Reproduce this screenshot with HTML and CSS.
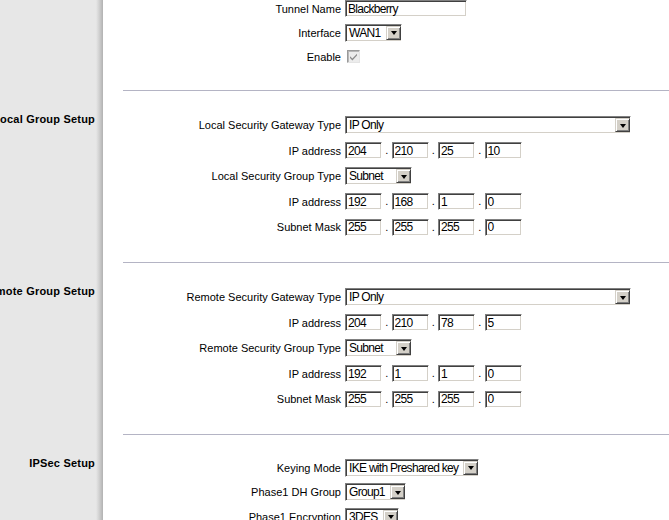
FILE: index.html
```html
<!DOCTYPE html>
<html lang="en">
<head>
  <meta charset="UTF-8" />
  <meta name="viewport" content="width=device-width, initial-scale=1.0" />
  <title>Gateway to Gateway</title>
  <link rel="stylesheet" href="styles.css">
</head>
<body>
  <div class="page">

    <div class="block">
      <div class="side"></div>
      <div class="main top">
        <div class="fields tight">
          <label>Tunnel Name</label>
          <div><input class="text name" type="text" value="Blackberry" /></div>
          <label>Interface</label>
          <div><span class="select w-if"><span class="val">WAN1</span><span class="btn"></span></span></div>
          <label>Enable</label>
          <div>
            <span class="check">
              <svg width="9" height="9" viewBox="0 0 9 9"><path d="M1 4.2 L3.4 6.6 L8 1.8 L8 3.6 L3.4 8.4 L1 6 Z" fill="#8c8c8c" /></svg>
            </span>
          </div>
        </div>
      </div>
    </div>

    <div class="block">
      <div class="side"><h2>Local Group Setup</h2></div>
      <div class="main">
        <div class="rule"></div>
        <div class="fields">
          <label>Local Security Gateway Type</label>
          <div><span class="select w-full"><span class="val">IP Only</span><span class="btn"></span></span></div>
          <label>IP address</label>
          <div class="ip">
            <input class="text oct" type="text" value="204" /><span class="dot">.</span>
            <input class="text oct" type="text" value="210" /><span class="dot">.</span>
            <input class="text oct" type="text" value="25" /><span class="dot">.</span>
            <input class="text oct" type="text" value="10" />
          </div>
          <label>Local Security Group Type</label>
          <div><span class="select w-sub"><span class="val">Subnet</span><span class="btn"></span></span></div>
          <label>IP address</label>
          <div class="ip">
            <input class="text oct" type="text" value="192" /><span class="dot">.</span>
            <input class="text oct" type="text" value="168" /><span class="dot">.</span>
            <input class="text oct" type="text" value="1" /><span class="dot">.</span>
            <input class="text oct" type="text" value="0" />
          </div>
          <label>Subnet Mask</label>
          <div class="ip">
            <input class="text oct" type="text" value="255" /><span class="dot">.</span>
            <input class="text oct" type="text" value="255" /><span class="dot">.</span>
            <input class="text oct" type="text" value="255" /><span class="dot">.</span>
            <input class="text oct" type="text" value="0" />
          </div>
        </div>
      </div>
    </div>

    <div class="block">
      <div class="side"><h2>Remote Group Setup</h2></div>
      <div class="main">
        <div class="rule"></div>
        <div class="fields">
          <label>Remote Security Gateway Type</label>
          <div><span class="select w-full"><span class="val">IP Only</span><span class="btn"></span></span></div>
          <label>IP address</label>
          <div class="ip">
            <input class="text oct" type="text" value="204" /><span class="dot">.</span>
            <input class="text oct" type="text" value="210" /><span class="dot">.</span>
            <input class="text oct" type="text" value="78" /><span class="dot">.</span>
            <input class="text oct" type="text" value="5" />
          </div>
          <label>Remote Security Group Type</label>
          <div><span class="select w-sub"><span class="val">Subnet</span><span class="btn"></span></span></div>
          <label>IP address</label>
          <div class="ip">
            <input class="text oct" type="text" value="192" /><span class="dot">.</span>
            <input class="text oct" type="text" value="1" /><span class="dot">.</span>
            <input class="text oct" type="text" value="1" /><span class="dot">.</span>
            <input class="text oct" type="text" value="0" />
          </div>
          <label>Subnet Mask</label>
          <div class="ip">
            <input class="text oct" type="text" value="255" /><span class="dot">.</span>
            <input class="text oct" type="text" value="255" /><span class="dot">.</span>
            <input class="text oct" type="text" value="255" /><span class="dot">.</span>
            <input class="text oct" type="text" value="0" />
          </div>
        </div>
      </div>
    </div>

    <div class="block">
      <div class="side"><h2>IPSec Setup</h2></div>
      <div class="main">
        <div class="rule"></div>
        <div class="fields ipsec">
          <label>Keying Mode</label>
          <div><span class="select w-key"><span class="val">IKE with Preshared key</span><span class="btn"></span></span></div>
          <label>Phase1 DH Group</label>
          <div><span class="select w-dh"><span class="val">Group1</span><span class="btn"></span></span></div>
          <label>Phase1 Encryption</label>
          <div><span class="select w-enc"><span class="val">3DES</span><span class="btn"></span></span></div>
        </div>
      </div>
    </div>

  </div>
</body>
</html>
```

FILE: styles.css
```css
body {
  margin: 0;
  background: #fff;
  font-family: "Liberation Sans", Arial, sans-serif;
  font-size: 11px;
  color: #000;
  overflow: hidden;
}
.page {
  width: 669px;
}
.block {
  display: grid;
  grid-template-columns: 103px 1fr;
}
.side {
  background: linear-gradient(to right, #e7e7e7 0, #e7e7e7 96px, #d2d2d2 99px, #b2b2b2 103px);
  overflow: hidden;
}
.side h2 {
  margin: 0;
  padding: 22px 8px 0 0;
  display: flex;
  justify-content: flex-end;
  font-size: 11px;
  line-height: 14px;
  font-weight: bold;
  letter-spacing: 0.2px;
  white-space: nowrap;
}
.main {
  padding: 0 0 26.5px 20px;
}
.main.top {
  padding-bottom: 25px;
}
.rule {
  height: 1px;
  background: #b4b4c4;
  margin-right: -20px;
}
.fields {
  display: grid;
  grid-template-columns: 218px auto;
  grid-auto-rows: 17px;
  column-gap: 4px;
  row-gap: 8.5px;
  align-items: center;
  margin-top: 25.5px;
}
.fields.tight {
  margin-top: 0;
  row-gap: 7px;
}
.fields.ipsec {
  margin-top: 24px;
  row-gap: 7.5px;
}
.fields label {
  text-align: right;
  white-space: nowrap;
  line-height: 14px;
}
.fields > div {
  display: flex;
  align-items: center;
  height: 17px;
}

/* classic sunken text box */
.text {
  box-sizing: border-box;
  height: 17px;
  margin: 0;
  padding: 0 0 0 2px;
  border: 1px solid;
  border-color: #808080 #fff #fff #808080;
  box-shadow: inset 1px 1px 0 #404040, inset -1px -1px 0 #d4d0c8;
  background: #fff;
  font-family: "Liberation Sans", Arial, sans-serif;
  font-size: 12px;
  letter-spacing: -0.7px;
  color: #000;
  outline: none;
}
.name {
  width: 122px;
}
.oct {
  width: 37px;
}
.dot {
  width: 9.5px;
  text-align: center;
  line-height: 17px;
  font-size: 11px;
}

/* drop-down */
.select {
  box-sizing: border-box;
  display: inline-flex;
  align-items: center;
  height: 18px;
  padding: 2px;
  border: 1px solid;
  border-color: #808080 #fff #fff #808080;
  box-shadow: inset 1px 1px 0 #404040, inset -1px -1px 0 #d4d0c8;
  background: #fff;
}
.select .val {
  flex: 1;
  padding-left: 1px;
  font-size: 12px;
  letter-spacing: -0.7px;
  line-height: 14px;
  white-space: nowrap;
  overflow: hidden;
}
.select .btn {
  box-sizing: border-box;
  flex: none;
  width: 15px;
  height: 14px;
  margin: -2px -2px -2px 0;
  display: flex;
  align-items: center;
  justify-content: center;
  background: #d4d0c8;
  border: 1px solid;
  border-color: #d4d0c8 #404040 #404040 #d4d0c8;
  box-shadow: inset 1px 1px 0 #fff, inset -1px -1px 0 #808080;
}
.select .btn::after {
  content: "";
  width: 0;
  height: 0;
  border-left: 3.5px solid transparent;
  border-right: 3.5px solid transparent;
  border-top: 4px solid #000;
  margin-top: 1px;
}
.w-full { width: 286px; }
.w-if { width: 57px; }
.w-sub { width: 67px; }
.w-key { width: 134px; }
.w-dh { width: 61px; }
.w-enc { width: 54px; }

/* disabled checkbox */
.check {
  box-sizing: border-box;
  width: 13px;
  height: 13px;
  margin-left: 2px;
  display: flex;
  align-items: center;
  justify-content: center;
  border: 1px solid;
  border-color: #9a9a9a #e4e4e4 #e4e4e4 #9a9a9a;
  box-shadow: inset 1px 1px 0 #b8b8b8;
  background: #ececec;
}
```
